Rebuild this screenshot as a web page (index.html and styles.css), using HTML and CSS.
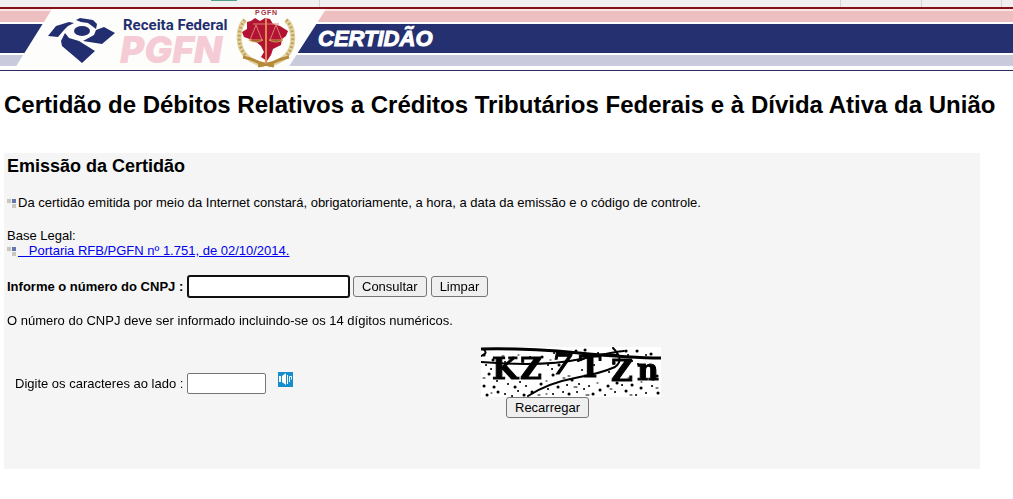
FILE: index.html
```html
<!DOCTYPE html>
<html lang="pt-BR">
<head>
<meta charset="utf-8">
<title>Certidão de Débitos</title>
<link rel="stylesheet" href="styles.css">
</head>
<body>
<div class="tabs"><i class="tab tab-first"></i><i class="tab tab-wide"></i><i class="tab tab-mid"></i><i class="tab tab-small"></i><i class="tab tab-end"></i></div>
<header class="banner">
<svg class="brand" width="460" height="61" viewBox="0 9 460 61" role="img" aria-label="Receita Federal PGFN Certidão">
  <path d="M52 9H326L288 68H15Z" fill="#fdfefb"/>
  <g fill="#232e70">
    <path d="M48 36L56 26L69 22L74 23L68 26L64 30L58 37Z"/>
    <path d="M76 20L80 18L93 20L97 24L96 29L92 26L88 23L81 22Z"/>
    <ellipse cx="82" cy="31" rx="8" ry="5"/>
    <path d="M65 33L69 38L79 41L95 51L82 63L62 46L61 41Z"/>
    <path d="M83 41L94 35L96 30L104 27L115 33L102 44Z"/>
  </g>
  <text class="receita" x="123" y="30">Receita Federal</text>
  <text class="pgfn" x="120" y="63">PGFN</text>
  <text class="seal-title" y="15"><tspan x="255">P</tspan><tspan x="261">G</tspan><tspan x="267">F</tspan><tspan x="272">N</tspan></text>
  <path d="M247 22L251 21L255 18L260 21L265 18L270 19L273 24L280 26L288 31L286 36L282 39L281 45L273 49L271 55L267 61L261 57L264 52L261 46L255 41L244 37L242 32L247 29Z" fill="#b31332"/>
  <g fill="none">
    <path d="M245 20C238 27 236 46 246 56Q252 62 264 65M286 20C294 27 296 46 286 56Q280 62 268 65" stroke="#e3d3a2" stroke-width="5"/>
    <path d="M245 20C238 27 236 46 246 56M286 20C294 27 296 46 286 56" stroke="#bfa25c" stroke-width="3" stroke-dasharray="2 2"/>
    <path d="M243 57Q252 59 260 63L274 66M289 57Q280 59 272 63L258 66" stroke="#b58a39" stroke-width="3"/>
    <path d="M253 24H279M256 25L250 40M256 25L262 40M276 25L270 40M276 25L282 40" stroke="#da8270"/>
    <path d="M266 18V64" stroke="#dc8a57" stroke-width="2"/>
    <path d="M249 40Q256 44 263 40ZM269 40Q276 44 283 40Z" fill="#702820" stroke="#d5a04c"/>
  </g>
  <text class="certidao" x="318" y="46">CERTIDÃO</text>
</svg>
</header>
<main class="page">
<h1 class="title">Certidão de Débitos Relativos a Créditos Tributários Federais e à Dívida Ativa da União</h1>
<form class="panel">
  <h2 class="subtitle">Emissão da Certidão</h2>
  <p class="notice"><svg class="bullet" width="11" height="9" viewBox="0 0 11 9"><path d="M0 0h4v4H0zM5 5h4v4H5z" fill="#c9c7bd"/><path d="M5 0h4v4H5z" fill="#6478ad"/></svg>Da certidão emitida por meio da Internet constará, obrigatoriamente, a hora, a data da emissão e o código de controle.</p>
  <p class="legal">Base Legal:<br><svg class="bullet" width="11" height="9" viewBox="0 0 11 9"><path d="M0 0h4v4H0zM5 5h4v4H5z" fill="#c9c7bd"/><path d="M5 0h4v4H5z" fill="#6478ad"/></svg><a class="link" href="#">&nbsp;&nbsp; Portaria RFB/PGFN nº 1.751, de 02/10/2014.</a></p>
  <div class="query">
    <label class="query-label" for="cnpj">Informe o número do CNPJ :</label>
    <input class="field cnpj" id="cnpj" type="text" autofocus>
    <button class="button" type="submit">Consultar</button>
    <button class="button" type="reset">Limpar</button>
  </div>
  <p class="help">O número do CNPJ deve ser informado incluindo-se os 14 dígitos numéricos.</p>
  <div class="verify">
    <div class="answer">
      <label class="answer-label" for="chars">Digite os caracteres ao lado :</label>
      <input class="field chars" id="chars" type="text">
      <button class="audio" type="button" aria-label="Ouvir os caracteres"><svg width="15" height="15" viewBox="0 0 15 15"><path d="M0 0h15v15H0z" fill="#168dcc"/><path d="M1 4h2v6H1zM4 4L8 1V13L4 10Z" fill="#fff"/><path d="M9.500 3v9M11.500 10V4.500h2v3" fill="none" stroke="#fff"/></svg></button>
    </div>
    <div class="challenge">
      <svg class="captcha" width="180" height="50" viewBox="0 0 180 50">
        <path d="M0 0h180v50H0z" fill="#fff"/>
        <g fill="none" stroke="#000" stroke-linecap="round">
          <path d="M3 8h.1M12 13h.1M8 27h.1M3 39h.1M13 40h.1M17 45h.1M6 48h.1M34 40h.1M43 48h.1M51 45h.1M60 37h.1M77 40h.1M91 33h.1M95 4h.1M104 3h.1M112 47h.1M119 43h.1M127 39h.1M136 36h.1M145 44h.1M151 38h.1M160 41h.1M176 29h.1M177 46h.1M170 7h.1M156 4h.1M145 4h.1M133 16h.1M78 18h.1M32 11h.1M61 10h.1M72 28h.1M88 47h.1" stroke-width="3"/>
          <path d="M5 18h.1M10 22h.1M19 19h.1M24 15h.1M16 34h.1M27 37h.1M39 35h.1M45 39h.1M24 47h.1M31 49h.1M37 44h.1M67 42h.1M72 47h.1M82 45h.1M86 38h.1M98 37h.1M96 45h.1M103 42h.1M108 39h.1M124 48h.1M134 45h.1M141 38h.1M155 48h.1M165 46h.1M171 39h.1M174 21h.1M164 24h.1M165 8h.1M147 8h.1M117 6h.1M80 4h.1M73 6h.1M54 3h.1M49 10h.1M67 18h.1M71 22h.1M101 23h.1M113 18h.1M128 25h.1M151 14h.1M157 17h.1" stroke-width="2"/>
          <path d="M2 31h2M21 9h2M37 8h1M53 11h2M65 34h1M82 31h2M87 29h2M93 40h3M116 36h1M129 42h2M149 48h2M160 35h1M171 33h2M175 41h2M46 17h1M93 13h1M147 31h1M10 46h1M57 48h2M65 47h1M105 48h3M69 13h1" stroke-width="1"/>
          <path d="M0 2Q45 1 98 6T180 11" stroke-width="3"/>
          <path d="M0 15Q63 20 100 12T143 4" stroke-width="2"/>
          <path d="M47 49Q67 36 94 31T134 20Q144 13 132 1M0 9Q8 6 2 2M97 14Q117 5 137 8" stroke-width="2"/>
        </g>
        <text class="glyphs" y="32"><tspan x="11">K</tspan><tspan x="39">Z</tspan><tspan class="slanted" x="71" y="27">7</tspan><tspan x="98" y="30">T</tspan><tspan x="130" y="34">Z</tspan><tspan x="156" y="33">n</tspan></text>
      </svg>
      <button class="button reload" type="button">Recarregar</button>
    </div>
  </div>
</form>
</main>
</body>
</html>
```
FILE: styles.css
```css
* { box-sizing: border-box; }
body { margin: 0; background: #fff; color: #000; font: 13px/15px "Liberation Sans", Arial, sans-serif; }
.tabs { display: flex; height: 7px; background: #f0f0f0; overflow: hidden; }
.tab { flex: none; border-right: 1px solid #d4d4d4; }
.tab-first { width: 237px; border: 0; background: linear-gradient(#4fa184, #4fa184) right top / 26px 1px no-repeat; }
.tab-wide { width: 83px; }
.tab-mid { width: 521px; }
.tab-small { width: 81px; }
.tab-end { width: 80px; }
.banner {
  border-top: 2px solid #8a1018;
  border-bottom: 1px solid #2b2862;
  background: linear-gradient(#f9e8e6 2px, #edbfc1 2px 13px, #fff 13px 15px, #24306f 15px 44px, #fff 44px 46px, #c9cadc 46px 57px, #fff 57px);
}
.brand { display: block; }
.receita { font: bold 15px Roboto, sans-serif; fill: #232e70; }
.pgfn { font: italic 900 37px Inter, "Liberation Sans", sans-serif; fill: #f5cbd6; }
.seal-title { font: bold 7px "Liberation Sans", Arial, sans-serif; fill: #a63145; }
.certidao { font: italic bold 22px "Liberation Sans", Arial, sans-serif; fill: #fff; stroke: #fff; stroke-width: 1px; }
.page { padding: 20px 33px 30px 4px; }
.title { margin: 0 -30px 34px 0; font-size: 24px; line-height: 28px; }
.panel { padding: 3px 3px 51px; background: #f5f5f5; }
.subtitle { margin: 0 0 19px; font-size: 18px; line-height: 20px; }
.notice { margin: 0 0 18px; }
.legal { margin: 0 0 18px; }
.bullet { vertical-align: -1px; }
.link { color: #0000ee; }
.query { display: flex; align-items: center; gap: 4px; }
.query-label { width: 177px; font-weight: bold; }
.field { height: 21px; border: 1px solid #767676; border-radius: 2px; padding: 1px 2px; background: #fff; font: 13px "Liberation Sans", Arial, sans-serif; }
.cnpj { width: 161px; outline: 0; border-color: #101010; box-shadow: 0 0 0 1px #101010; }
.button { height: 21px; padding: 1px 8px; border: 1px solid #767676; border-radius: 3px; background: #efefef; color: #000; font: 13px "Liberation Sans", Arial, sans-serif; }
.help { margin: 16px 0 19px; }
.verify { display: grid; grid-template-columns: 474px 1fr; }
.answer { display: flex; align-items: center; padding: 8px 0 6px 8px; }
.answer-label { width: 172px; }
.chars { width: 79px; }
.audio { display: block; margin: 0 0 8px 12px; padding: 0; border: 0; background: none; }
.audio svg, .captcha { display: block; }
.glyphs { font: bold 30px "DejaVu Serif", serif; stroke: #000; stroke-width: 1px; }
.slanted { font-style: italic; }
.reload { margin-left: 25px; }
```
